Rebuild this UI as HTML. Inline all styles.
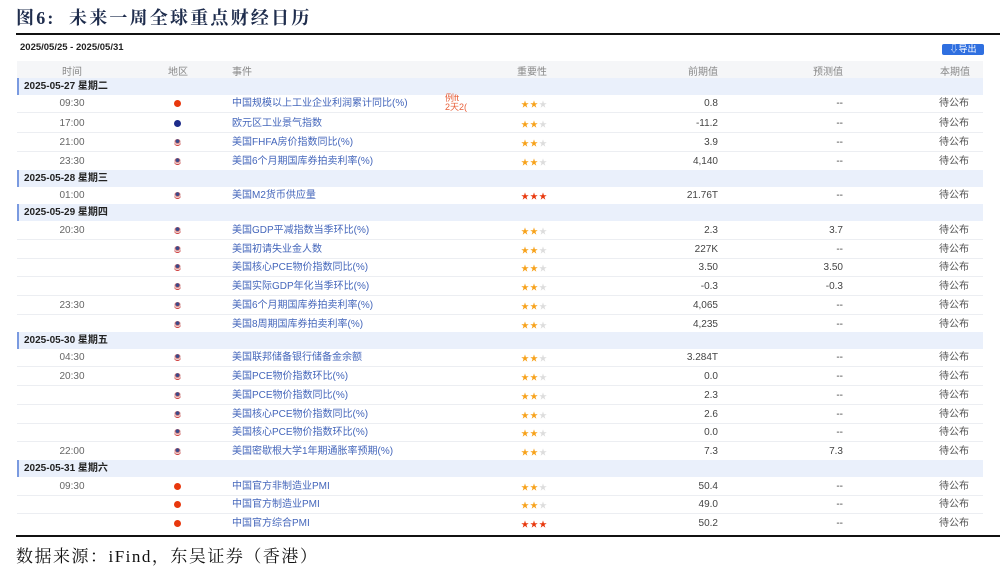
<!DOCTYPE html>
<html><head><meta charset="utf-8"><style>
*{margin:0;padding:0;box-sizing:border-box}
body{width:1000px;height:568px;background:#fff;position:relative;overflow:hidden;font-family:"Liberation Sans","Noto Sans CJK SC",sans-serif;font-size:10px;color:#555}
.a{position:absolute}
.title{left:16px;top:4px;font-family:"Liberation Serif","Noto Serif CJK SC",serif;font-weight:bold;font-size:18px;color:#1f2d4d;letter-spacing:2.2px}
.row{position:absolute;left:17px;width:966px;height:19px;border-bottom:1px solid #eceef2}
.row span{position:absolute;top:3px;line-height:13px;white-space:nowrap}
.t{left:30px;width:50px;text-align:center;color:#666}
.f{left:157px;top:6px!important;width:7px;height:7px;border-radius:50%}
.cn{background:#e8380d}.eu{background:#1d2b8a}.us{background:radial-gradient(circle at 50% 30%,#3a4a8a 30%,#d45a5a 32%,#eee 60%,#c33 70%)}
.e{left:215px;color:#4466bb}
.s{left:504px;font-size:8px;letter-spacing:1px;top:4px!important}
.o{color:#f7a21b}.r{color:#e8380d}.g{color:#ddd}
.p{right:265px;color:#444}
.fc{right:140px;color:#444}
.c{right:14px;color:#555}
.hd{position:absolute;left:17px;width:966px;height:17px;background:#eaf0fb;border-left:2px solid #7a9ae0;font-weight:bold;color:#222;font-size:10px;line-height:17px;padding-left:5px}
</style></head><body>
<div class="a title">图6:&nbsp;&nbsp;未来一周全球重点财经日历</div>
<div class="a" style="left:16px;top:33px;width:984px;height:2px;background:#111"></div>
<div class="a" style="left:20px;top:42px;font-weight:bold;color:#222;font-size:9.5px">2025/05/25 - 2025/05/31</div>
<div class="a" style="left:942px;top:44px;width:42px;height:11px;background:#2f6fe0;border-radius:2px;color:#fff;font-size:9px;line-height:11px;text-align:center">⇩导出</div>
<div class="a" style="left:17px;top:61px;width:966px;height:17px;background:#f5f6f8;color:#888"></div>
<div class="a" style="left:62px;top:63px;color:#888">时间</div>
<div class="a" style="left:168px;top:63px;color:#888">地区</div>
<div class="a" style="left:232px;top:63px;color:#888">事件</div>
<div class="a" style="left:517px;top:63px;color:#888">重要性</div>
<div class="a" style="left:688px;top:63px;color:#888">前期值</div>
<div class="a" style="left:813px;top:63px;color:#888">预测值</div>
<div class="a" style="left:940px;top:63px;color:#888">本期值</div>
<div class="hd" style="top:78px">2025-05-27 星期二</div>
<div class="a" style="left:445px;top:94px;color:#e8603a;font-size:9px;line-height:9px">例ft<br>2天2(</div>

<div class="row" style="top:94px"><span class="t">09:30</span><span class="f cn"></span><span class="e">中国规模以上工业企业利润累计同比(%)</span><span class="s"><b class="o">★★</b><b class="g">★</b></span><span class="p">0.8</span><span class="fc">--</span><span class="c">待公布</span></div>
<div class="row" style="top:114px"><span class="t">17:00</span><span class="f eu"></span><span class="e">欧元区工业景气指数</span><span class="s"><b class="o">★★</b><b class="g">★</b></span><span class="p">-11.2</span><span class="fc">--</span><span class="c">待公布</span></div>
<div class="row" style="top:133px"><span class="t">21:00</span><span class="f us"></span><span class="e">美国FHFA房价指数同比(%)</span><span class="s"><b class="o">★★</b><b class="g">★</b></span><span class="p">3.9</span><span class="fc">--</span><span class="c">待公布</span></div>
<div class="row" style="top:152px"><span class="t">23:30</span><span class="f us"></span><span class="e">美国6个月期国库券拍卖利率(%)</span><span class="s"><b class="o">★★</b><b class="g">★</b></span><span class="p">4,140</span><span class="fc">--</span><span class="c">待公布</span></div>
<div class="hd" style="top:170px">2025-05-28 星期三</div>
<div class="row" style="top:186px"><span class="t">01:00</span><span class="f us"></span><span class="e">美国M2货币供应量</span><span class="s"><b class="r">★★★</b></span><span class="p">21.76T</span><span class="fc">--</span><span class="c">待公布</span></div>
<div class="hd" style="top:204px">2025-05-29 星期四</div>
<div class="row" style="top:221px"><span class="t">20:30</span><span class="f us"></span><span class="e">美国GDP平减指数当季环比(%)</span><span class="s"><b class="o">★★</b><b class="g">★</b></span><span class="p">2.3</span><span class="fc">3.7</span><span class="c">待公布</span></div>
<div class="row" style="top:240px"><span class="f us"></span><span class="e">美国初请失业金人数</span><span class="s"><b class="o">★★</b><b class="g">★</b></span><span class="p">227K</span><span class="fc">--</span><span class="c">待公布</span></div>
<div class="row" style="top:258px"><span class="f us"></span><span class="e">美国核心PCE物价指数同比(%)</span><span class="s"><b class="o">★★</b><b class="g">★</b></span><span class="p">3.50</span><span class="fc">3.50</span><span class="c">待公布</span></div>
<div class="row" style="top:277px"><span class="f us"></span><span class="e">美国实际GDP年化当季环比(%)</span><span class="s"><b class="o">★★</b><b class="g">★</b></span><span class="p">-0.3</span><span class="fc">-0.3</span><span class="c">待公布</span></div>
<div class="row" style="top:296px"><span class="t">23:30</span><span class="f us"></span><span class="e">美国6个月期国库券拍卖利率(%)</span><span class="s"><b class="o">★★</b><b class="g">★</b></span><span class="p">4,065</span><span class="fc">--</span><span class="c">待公布</span></div>
<div class="row" style="top:315px"><span class="f us"></span><span class="e">美国8周期国库券拍卖利率(%)</span><span class="s"><b class="o">★★</b><b class="g">★</b></span><span class="p">4,235</span><span class="fc">--</span><span class="c">待公布</span></div>
<div class="hd" style="top:332px">2025-05-30 星期五</div>
<div class="row" style="top:348px"><span class="t">04:30</span><span class="f us"></span><span class="e">美国联邦储备银行储备金余额</span><span class="s"><b class="o">★★</b><b class="g">★</b></span><span class="p">3.284T</span><span class="fc">--</span><span class="c">待公布</span></div>
<div class="row" style="top:367px"><span class="t">20:30</span><span class="f us"></span><span class="e">美国PCE物价指数环比(%)</span><span class="s"><b class="o">★★</b><b class="g">★</b></span><span class="p">0.0</span><span class="fc">--</span><span class="c">待公布</span></div>
<div class="row" style="top:386px"><span class="f us"></span><span class="e">美国PCE物价指数同比(%)</span><span class="s"><b class="o">★★</b><b class="g">★</b></span><span class="p">2.3</span><span class="fc">--</span><span class="c">待公布</span></div>
<div class="row" style="top:405px"><span class="f us"></span><span class="e">美国核心PCE物价指数同比(%)</span><span class="s"><b class="o">★★</b><b class="g">★</b></span><span class="p">2.6</span><span class="fc">--</span><span class="c">待公布</span></div>
<div class="row" style="top:423px"><span class="f us"></span><span class="e">美国核心PCE物价指数环比(%)</span><span class="s"><b class="o">★★</b><b class="g">★</b></span><span class="p">0.0</span><span class="fc">--</span><span class="c">待公布</span></div>
<div class="row" style="top:442px"><span class="t">22:00</span><span class="f us"></span><span class="e">美国密歇根大学1年期通胀率预期(%)</span><span class="s"><b class="o">★★</b><b class="g">★</b></span><span class="p">7.3</span><span class="fc">7.3</span><span class="c">待公布</span></div>
<div class="hd" style="top:460px">2025-05-31 星期六</div>
<div class="row" style="top:477px"><span class="t">09:30</span><span class="f cn"></span><span class="e">中国官方非制造业PMI</span><span class="s"><b class="o">★★</b><b class="g">★</b></span><span class="p">50.4</span><span class="fc">--</span><span class="c">待公布</span></div>
<div class="row" style="top:495px"><span class="f cn"></span><span class="e">中国官方制造业PMI</span><span class="s"><b class="o">★★</b><b class="g">★</b></span><span class="p">49.0</span><span class="fc">--</span><span class="c">待公布</span></div>
<div class="row" style="top:514px;border-bottom:none"><span class="f cn"></span><span class="e">中国官方综合PMI</span><span class="s"><b class="r">★★★</b></span><span class="p">50.2</span><span class="fc">--</span><span class="c">待公布</span></div>

<div class="a" style="left:16px;top:535px;width:984px;height:2px;background:#111"></div>
<div class="a" style="left:16px;top:542px;font-family:'Liberation Serif','Noto Serif CJK SC',serif;font-size:17px;color:#111;letter-spacing:1.5px">数据来源：iFind，东吴证券（香港）</div>
</body></html>
